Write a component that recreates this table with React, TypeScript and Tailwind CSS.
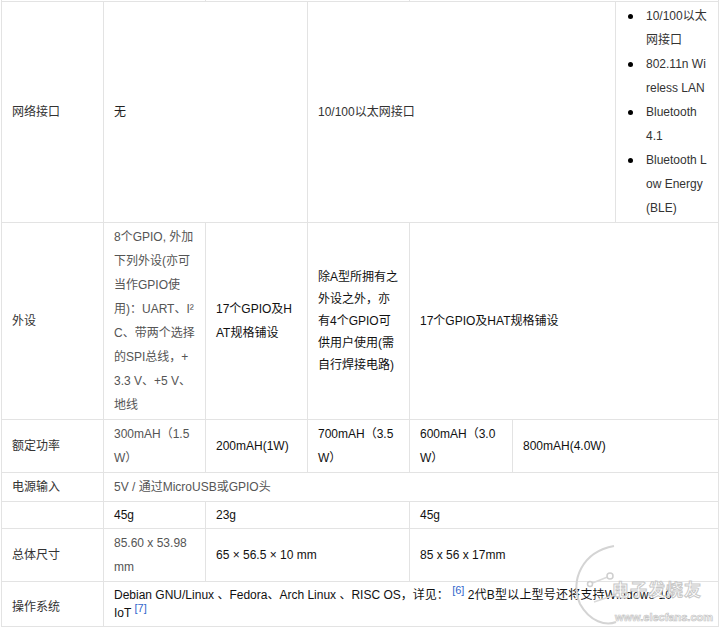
import React from "react";

type CellProps = { className?: string; children?: React.ReactNode };

function Cell({ className = "", children }: CellProps) {
  return (
    <div className={`border-r border-b border-[#e3e3e3] flex items-center px-[10px] ${className}`}>
      {children}
    </div>
  );
}

function Lines({ lines, className = "" }: { lines: React.ReactNode[]; className?: string }) {
  return (
    <div className={`whitespace-nowrap ${className}`}>
      {lines.map((l, i) => (
        <div key={i}>{l}</div>
      ))}
    </div>
  );
}

function Bullet({ lines }: { lines: string[] }) {
  return (
    <div className="flex">
      <div className="w-[30px] shrink-0 flex justify-start pl-[12px] pt-[10px]">
        <span className="block w-[5px] h-[5px] rounded-full bg-black" />
      </div>
      <Lines lines={lines} />
    </div>
  );
}

export default function App() {
  return (
    <div className="relative w-[720px] h-[628px] bg-white overflow-hidden font-['Liberation_Sans','Noto_Sans_CJK_SC',sans-serif] text-[12px] leading-[24px] text-[#333]">
      <div className="ml-[1px] w-[718px] border-l border-[#e3e3e3] grid grid-cols-[102px_102px_102px_102px_103px_103px_103px] grid-rows-[2px_221px_197px_53px_29px_27px_53px_45px]">
        {/* remnant row */}
        <div className="col-span-2 border-r border-b border-[#e3e3e3]" />
        <div className="col-span-2 border-r border-b border-[#e3e3e3]" />
        <div className="col-span-3 border-r border-b border-[#e3e3e3]" />

        {/* 网络接口 */}
        <Cell>网络接口</Cell>
        <Cell className="col-span-2 text-[#222]">无</Cell>
        <Cell className="col-span-3">10/100以太网接口</Cell>
        <div className="border-r border-b border-[#e3e3e3] flex flex-col justify-center text-[#333]">
          <Bullet lines={["10/100以太", "网接口"]} />
          <Bullet lines={["802.11n Wi", "reless LAN"]} />
          <Bullet lines={["Bluetooth", "4.1"]} />
          <Bullet lines={["Bluetooth L", "ow Energy", "(BLE)"]} />
        </div>

        {/* 外设 */}
        <Cell>外设</Cell>
        <Cell className="text-[#555]">
          <Lines
            lines={[
              "8个GPIO, 外加",
              "下列外设(亦可",
              "当作GPIO使",
              "用)：UART、I²",
              "C、带两个选择",
              "的SPI总线，+",
              "3.3 V、+5 V、",
              "地线",
            ]}
          />
        </Cell>
        <Cell className="text-[#111]">
          <Lines lines={["17个GPIO及H", "AT规格铺设"]} />
        </Cell>
        <Cell className="text-[#111]">
          <Lines
            className="leading-[22px]"
            lines={["除A型所拥有之", "外设之外，亦", "有4个GPIO可", "供用户使用(需", "自行焊接电路)"]}
          />
        </Cell>
        <Cell className="col-span-3 text-[#111]">17个GPIO及HAT规格铺设</Cell>

        {/* 额定功率 */}
        <Cell>额定功率</Cell>
        <Cell className="text-[#555]">
          <Lines lines={["300mAH（1.5", "W）"]} />
        </Cell>
        <Cell className="text-[#111]">200mAH(1W)</Cell>
        <Cell className="text-[#111]">
          <Lines lines={["700mAH（3.5", "W）"]} />
        </Cell>
        <Cell className="text-[#111]">
          <Lines lines={["600mAH（3.0", "W）"]} />
        </Cell>
        <Cell className="col-span-2 text-[#111]">800mAH(4.0W)</Cell>

        {/* 电源输入 */}
        <Cell>电源输入</Cell>
        <Cell className="col-span-6 text-[#555]">5V / 通过MicroUSB或GPIO头</Cell>

        {/* weight */}
        <Cell />
        <Cell className="text-[#111]">45g</Cell>
        <Cell className="col-span-2 text-[#111]">23g</Cell>
        <Cell className="col-span-3 text-[#111]">45g</Cell>

        {/* 总体尺寸 */}
        <Cell>总体尺寸</Cell>
        <Cell className="text-[#555]">
          <Lines lines={["85.60 x 53.98", "mm"]} />
        </Cell>
        <Cell className="col-span-2 text-[#111]">65 × 56.5 × 10 mm</Cell>
        <Cell className="col-span-3 text-[#111]">85 x 56 x 17mm</Cell>

        {/* 操作系统 */}
        <Cell className="pt-[5px]">操作系统</Cell>
        <Cell className="col-span-6 text-[#111]">
          <div className="leading-[18px]">
            <div className="whitespace-nowrap">
              Debian GNU/Linux 、Fedora、Arch Linux 、RISC OS，详见：{" "}
              <sup className="text-[#3366cc] text-[11px] leading-none">[6]</sup>{" "}
              <span className="tracking-[0.2px]">2代B型以上型号还将支持Windows 10</span>
            </div>
            <div className="whitespace-nowrap">
              IoT <sup className="text-[#3366cc] text-[11px] leading-none">[7]</sup>
            </div>
          </div>
        </Cell>
      </div>

      {/* watermark */}
      <div className="pointer-events-none absolute left-[560px] top-[540px] w-[160px] h-[88px]">
        <svg className="absolute left-0 top-0" width="70" height="88" viewBox="0 0 70 88">
          <path d="M54 6 C22 12 10 40 20 64 C30 82 46 86 56 82" fill="none" stroke="#d4d4d4" strokeWidth="2" />
          <path d="M30 44 L50 36 M34 62 L58 54" fill="none" stroke="#dadada" strokeWidth="1.5" />
          <circle cx="50" cy="36" r="3" fill="#fff" stroke="#cfcfcf" strokeWidth="1.5" />
          <circle cx="58" cy="54" r="3" fill="#fff" stroke="#cfcfcf" strokeWidth="1.5" />
          <circle cx="30" cy="44" r="2.5" fill="#fff" stroke="#cfcfcf" strokeWidth="1.5" />
        </svg>
        <div className="absolute left-[52px] top-[41px] text-[17px] leading-[20px] font-bold text-white [-webkit-text-stroke:1px_#c8c8c8] whitespace-nowrap tracking-[1px]">
          电子发烧友
        </div>
        <div className="absolute left-[55px] top-[71px] text-[11px] leading-[12px] font-bold text-white [-webkit-text-stroke:0.7px_#c4c4c4] whitespace-nowrap">
          www.elecfans.com
        </div>
      </div>
    </div>
  );
}
